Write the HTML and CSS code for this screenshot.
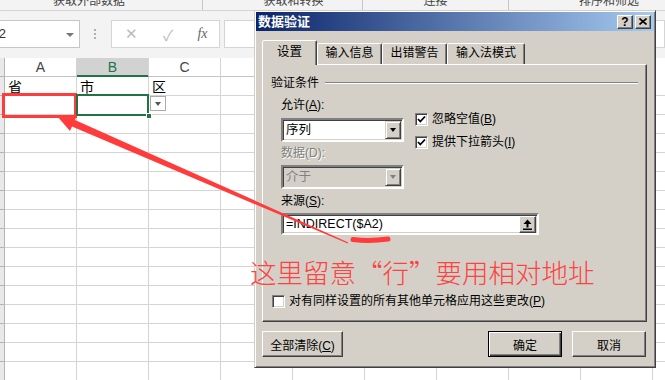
FILE: index.html
```html
<!DOCTYPE html>
<html lang="zh-CN">
<head>
    <meta charset="UTF-8">
    <meta name="viewport" content="width=device-width, initial-scale=1.0">
    <title>数据验证</title>
    <link rel="stylesheet" href="styles.css">
</head>
<body>
    <div class="sheet">
        <div class="ribbon-foot">
            <div class="group g1"><span>获取外部数据</span></div>
            <div class="group g2"><span>获取和转换</span></div>
            <div class="group g3"><span>连接</span></div>
            <div class="group g4"><span>排序和筛选</span></div>
        </div>

        <div class="formula-bar">
            <div class="name-box">A2<i class="caret"></i></div>
            <div class="grip"></div>
            <div class="fx-box">
                <span class="fx-cancel">✕</span>
                <span class="fx-enter">✓</span>
                <span class="fx-insert">fx</span>
            </div>
            <div class="formula-input"></div>
        </div>

        <div class="col-heads">
            <div class="corner"></div>
            <div class="col-h">A</div>
            <div class="col-h selected">B</div>
            <div class="col-h">C</div>
            <div class="col-h"></div>
            <div class="col-h"></div>
            <div class="col-h"></div>
            <div class="col-h"></div>
            <div class="col-h"></div>
            <div class="col-h"></div>
        </div>

        <div class="sheet-body">
            <div class="row-heads"></div>
            <div class="cells">
                <div class="row">
                    <div class="cell">省</div>
                    <div class="cell">市</div>
                    <div class="cell">区</div>
                </div>
                <div class="row">
                    <div class="cell marked"></div>
                    <div class="cell active">
                        <span class="handle"></span>
                        <span class="list-btn"></span>
                    </div>
                </div>
            </div>
        </div>
    </div>

    <!-- data validation dialog, floats over the sheet -->
    <div class="dialog">
        <div class="title-bar">
            <h1>数据验证</h1>
            <span class="cap-btn">?</span>
            <span class="cap-btn">
                <svg width="8" height="7" viewBox="0 0 8 7"><path d="M0.5 0.5 L7.5 6.5 M7.5 0.5 L0.5 6.5" stroke="#000" stroke-width="1.6"/></svg>
            </span>
        </div>

        <div class="dialog-body">
            <div class="tabs">
                <div class="tab active">设置</div>
                <div class="tab">输入信息</div>
                <div class="tab">出错警告</div>
                <div class="tab">输入法模式</div>
            </div>

            <div class="panel">
                <div class="group-title">验证条件</div>

                <div class="settings">
                    <div class="col-left">
                        <div class="field-label allow-label">允许(<u>A</u>):</div>
                        <div class="combo allow-combo"><span>序列</span><i class="drop"></i></div>
                        <div class="field-label data-label disabled">数据(D):</div>
                        <div class="combo disabled"><span>介于</span><i class="drop"></i></div>
                    </div>
                    <div class="checks">
                        <label class="check">
                            <span class="box"><svg width="9" height="9" viewBox="0 0 9 9"><polyline points="1,4 3.3,6.5 8,1.5" fill="none" stroke="#000" stroke-width="1.8"/></svg></span>
                            <span>忽略空值(<u>B</u>)</span>
                        </label>
                        <label class="check">
                            <span class="box"><svg width="9" height="9" viewBox="0 0 9 9"><polyline points="1,4 3.3,6.5 8,1.5" fill="none" stroke="#000" stroke-width="1.8"/></svg></span>
                            <span>提供下拉箭头(<u>I</u>)</span>
                        </label>
                    </div>
                </div>

                <div class="field-label source-label">来源(<u>S</u>):</div>
                <div class="source">
                    <span>=INDIRECT($A2)</span>
                    <i class="pick">
                        <svg width="9" height="11" viewBox="0 0 9 11"><polygon points="4.5,0.5 8.5,5 5.5,5 5.5,8.5 3.5,8.5 3.5,5 0.5,5" fill="#000"/><rect x="0" y="9.5" width="9" height="1.5" fill="#000"/></svg>
                    </i>
                </div>

                <label class="check apply-all">
                    <span class="box"></span>
                    <span>对有同样设置的所有其他单元格应用这些更改(<u>P</u>)</span>
                </label>
            </div>

            <div class="actions">
                <button class="btn clear">全部清除(<u>C</u>)</button>
                <button class="btn ok">确定</button>
                <button class="btn cancel">取消</button>
            </div>
        </div>
    </div>

    <p class="note">这里留意“行”要用相对地址</p>

    <svg class="arrow" width="665" height="380" viewBox="0 0 665 380">
        <polygon points="57,116 77,115.5 75,120 348.3,242.4 347.7,243.6 72,126.5 70,131" fill="#ff3b3b"/>
        <path d="M353 239.5 Q370 241.5 388 239" stroke="#ff3b3b" stroke-width="5" stroke-linecap="round" fill="none"/>
    </svg>
</body>
</html>
```

FILE: styles.css
```css
* {
    box-sizing: border-box;
}

body {
    position: relative;
    width: 665px;
    height: 380px;
    margin: 0;
    overflow: hidden;
    background: #fff;
    color: #000;
    font-family: "Liberation Sans", "Noto Sans CJK SC", sans-serif;
    font-size: 12px;
}

/* ---- spreadsheet ---- */

.ribbon-foot {
    display: flex;
    height: 11px;
    overflow: hidden;
    background: #f3f3f3;
    border-bottom: 1px solid #d5d5d5;
    color: #444;
}

.group {
    flex: none;
    text-align: center;
    line-height: 14px;
    border-right: 1px solid #c6c6c6;
}

.group span {
    display: block;
    margin-top: -6px;
}

.g1 { width: 203px; padding-right: 24px; }
.g2 { width: 160px; padding-left: 22px; }
.g3 { width: 146px; }
.g4 { width: 200px; border-right: none; }

.formula-bar {
    display: flex;
    align-items: flex-start;
    height: 47px;
    padding-top: 9px;
    background: #f3f3f3;
}

.name-box {
    position: relative;
    flex: none;
    width: 94px;
    height: 28px;
    margin-left: -14px;
    padding-left: 3px;
    background: #fff;
    border: 1px solid #c6c6c6;
    color: #333;
    font-size: 13px;
    line-height: 26px;
}

.caret {
    position: absolute;
    right: 5px;
    top: 12px;
    border-left: 4px solid transparent;
    border-right: 4px solid transparent;
    border-top: 4px solid #777;
}

.grip {
    flex: none;
    width: 2px;
    height: 10px;
    margin: 9px 0 0 14px;
    border-left: 2px dotted #b0b0b0;
}

.fx-box {
    display: flex;
    align-items: center;
    flex: none;
    width: 109px;
    height: 28px;
    margin-left: 15px;
    background: #fff;
    border: 1px solid #d5d5d5;
}

.fx-box span {
    text-align: center;
    color: #bbb;
    font-size: 15px;
}

.fx-cancel { width: 38px; }
.fx-enter { width: 36px; }

.fx-box .fx-insert {
    width: 33px;
    color: #666;
    font-family: "Liberation Serif", serif;
    font-style: italic;
    font-size: 14px;
}

.formula-input {
    flex: 1;
    height: 28px;
    margin-left: 4px;
    background: #fff;
    border: 1px solid #d5d5d5;
}

.col-heads {
    display: flex;
    height: 19px;
}

.corner {
    flex: none;
    width: 5px;
    background: #e9e9e9;
    border-right: 1px solid #b5b5b5;
    border-bottom: 1px solid #b5b5b5;
}

.col-h {
    flex: none;
    width: 72px;
    border-right: 1px solid #d4d4d4;
    border-bottom: 1px solid #c4c4c4;
    color: #444;
    text-align: center;
    font-size: 14px;
    line-height: 18px;
}

.col-h.selected {
    background: #d2d2d2;
    color: #217346;
    border-bottom-color: #217346;
    box-shadow: inset 0 -1px #217346;
}

.sheet-body {
    display: flex;
    height: 303px;
}

.row-heads {
    flex: none;
    width: 5px;
    background-color: #e9e9e9;
    background-image: linear-gradient(to bottom, transparent 18px, #b5b5b5 18px);
    background-size: 100% 19px;
    border-right: 1px solid #b5b5b5;
}

.cells {
    flex: 1;
    background-image:
        linear-gradient(to right, transparent 71px, #d4d4d4 71px),
        linear-gradient(to bottom, transparent 18px, #d4d4d4 18px);
    background-size: 72px 19px;
}

.row {
    display: flex;
    height: 19px;
}

.cell {
    position: relative;
    flex: none;
    width: 72px;
    padding-left: 3px;
    font-family: "Noto Sans CJK SC", sans-serif;
    font-size: 14px;
    line-height: 18px;
}

.cell.marked::after {
    content: "";
    position: absolute;
    left: -3px;
    top: -3px;
    right: 0;
    bottom: -3px;
    border: 3px solid #ff3b3b;
}

.cell.active::after {
    content: "";
    position: absolute;
    left: -1px;
    top: -2px;
    right: 0;
    bottom: -1px;
    border: 2px solid #217346;
}

.handle {
    position: absolute;
    right: -3px;
    bottom: -4px;
    z-index: 1;
    width: 6px;
    height: 6px;
    background: #217346;
    border: 1px solid #fff;
}

.list-btn {
    position: absolute;
    left: 100%;
    top: 0;
    width: 16px;
    height: 15px;
    margin-left: 1px;
    background: #fff;
    border: 1px solid #ababab;
}

.list-btn::after {
    content: "";
    position: absolute;
    left: 4px;
    top: 5px;
    border-left: 3.5px solid transparent;
    border-right: 3.5px solid transparent;
    border-top: 4px solid #555;
}

/* ---- dialog ---- */

.dialog {
    position: absolute;
    left: 254px;
    top: 10px;
    width: 402px;
    height: 358px;
    padding: 1px;
    background: #d4d0c8;
    border: 1px solid;
    border-color: #d4d0c8 #404040 #404040 #d4d0c8;
    box-shadow: inset 1px 1px #fff, inset -1px -1px #808080;
    font-family: "Liberation Sans", "Noto Sans CJK SC", sans-serif;
    font-size: 12px;
}

.title-bar {
    display: flex;
    align-items: center;
    height: 19px;
    padding: 0 3px 0 2px;
    background: linear-gradient(to right, #0a246a, #a6caf0);
    color: #fff;
}

.title-bar h1 {
    flex: 1;
    margin: 0;
    font-size: 13px;
    font-weight: bold;
    line-height: 19px;
}

.cap-btn {
    display: flex;
    align-items: center;
    justify-content: center;
    width: 16px;
    height: 14px;
    margin-left: 2px;
    background: #d4d0c8;
    border: 1px solid;
    border-color: #fff #404040 #404040 #fff;
    box-shadow: inset -1px -1px #808080;
    color: #000;
    font-weight: bold;
    font-size: 12px;
}

.dialog-body {
    padding: 9px 7px 0 6px;
}

.tabs {
    position: relative;
    z-index: 1;
    display: flex;
    align-items: flex-end;
    height: 24px;
}

.tab {
    height: 21px;
    background: #d4d0c8;
    border: 1px solid;
    border-bottom: none;
    border-color: #fff #404040 transparent #fff;
    border-radius: 2px 2px 0 0;
    box-shadow: inset -1px 0 #808080;
    text-align: center;
    line-height: 19px;
}

.tab:nth-child(1) { width: 55px; }
.tab:nth-child(2) { width: 65px; }
.tab:nth-child(3) { width: 65px; }
.tab:nth-child(4) { width: 78px; }

.tab.active {
    height: 25px;
    margin-bottom: -1px;
    font-size: 12.5px;
    line-height: 22px;
}

.panel {
    height: 258px;
    padding: 11px 8px 0 8px;
    border: 1px solid;
    border-color: #fff #404040 #404040 #fff;
    box-shadow: inset -1px -1px #808080;
}

.group-title {
    display: flex;
    align-items: center;
    line-height: 14px;
}

.group-title::after {
    content: "";
    flex: 1;
    margin-left: 6px;
    border-top: 1px solid #808080;
    border-bottom: 1px solid #fff;
}

.settings {
    display: flex;
    margin-left: 10px;
}

.col-left {
    width: 123px;
}

.field-label {
    line-height: 14px;
}

.field-label.disabled {
    color: #808080;
    text-shadow: 1px 1px #fff;
}

.allow-label { margin-top: 8px; }
.data-label { margin-top: 4px; }

.combo {
    display: flex;
    height: 24px;
    margin-top: 5px;
    background: #fff;
    border: 2px solid;
    border-color: #808080 #fff #fff #808080;
    box-shadow: inset 1px 1px #404040, inset -1px -1px #d4d0c8;
}

.allow-combo {
    margin-top: 6px;
}

.combo span {
    flex: 1;
    padding: 1px 0 0 3px;
    line-height: 19px;
    font-size: 12.5px;
}

.drop {
    display: flex;
    align-items: center;
    justify-content: center;
    width: 16px;
    margin: 1px 1px 1px 0;
    background: #d4d0c8;
    border: 1px solid;
    border-color: #d4d0c8 #404040 #404040 #d4d0c8;
    box-shadow: inset 1px 1px #fff, inset -1px -1px #808080;
}

.drop::after {
    content: "";
    border-left: 3.5px solid transparent;
    border-right: 3.5px solid transparent;
    border-top: 4px solid #000;
}

.combo.disabled {
    background: #d4d0c8;
    color: #808080;
}

.combo.disabled .drop::after {
    border-top-color: #808080;
}

.checks {
    margin-left: 11px;
    padding-top: 22px;
}

.check {
    display: flex;
    align-items: center;
    gap: 4px;
    line-height: 14px;
}

.check + .check {
    margin-top: 9px;
}

.box {
    display: flex;
    align-items: center;
    justify-content: center;
    flex: none;
    width: 13px;
    height: 13px;
    background: #fff;
    border: 1px solid;
    border-color: #808080 #fff #fff #808080;
    box-shadow: inset 1px 1px #404040, inset -1px -1px #d4d0c8;
}

.source-label {
    margin: 5px 0 0 10px;
}

.source {
    display: flex;
    align-items: center;
    width: 258px;
    height: 22px;
    margin: 5px 0 0 10px;
    padding-right: 1px;
    background: #fff;
    border: 2px solid;
    border-color: #808080 #fff #fff #808080;
    box-shadow: inset 1px 1px #404040, inset -1px -1px #d4d0c8;
}

.source span {
    flex: 1;
    padding-left: 3px;
    font-size: 12.5px;
}

.pick {
    display: flex;
    align-items: center;
    justify-content: center;
    width: 17px;
    height: 17px;
    background: #d4d0c8;
    border: 1px solid;
    border-color: #fff #404040 #404040 #fff;
    box-shadow: inset -1px -1px #808080;
}

.apply-all {
    margin: 59px 0 0 1px;
}

.actions {
    display: flex;
    gap: 10px;
    margin-top: 9px;
    padding-right: 1px;
}

.btn {
    height: 26px;
    padding: 0;
    background: #d4d0c8;
    border: 1px solid;
    border-color: #fff #404040 #404040 #fff;
    box-shadow: inset -1px -1px #808080;
    color: #000;
    font: inherit;
}

.btn.clear {
    width: 81px;
    margin-right: auto;
}

.btn.ok,
.btn.cancel {
    width: 74px;
}

.btn.ok {
    border-color: #000;
    box-shadow: inset 1px 1px #fff, inset -1px -1px #404040, inset -2px -2px #808080;
}

/* ---- annotations ---- */

.note {
    position: absolute;
    left: 250px;
    top: 256px;
    margin: 0;
    color: #ff4141;
    font-family: "Noto Sans CJK SC", sans-serif;
    font-size: 26.5px;
    font-weight: 300;
    line-height: 32px;
    white-space: nowrap;
}

.arrow {
    position: absolute;
    left: 0;
    top: 0;
    pointer-events: none;
}
```
